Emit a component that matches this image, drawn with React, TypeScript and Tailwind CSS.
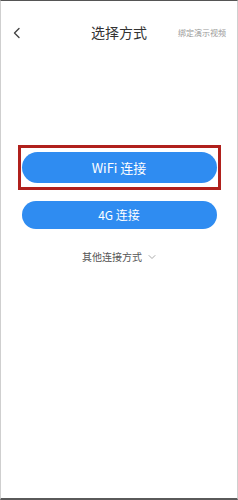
import React from 'react';

const font = { fontFamily: '"Noto Sans CJK SC", "Noto Sans", sans-serif' };

export default function App() {
  return (
    <div
      className="w-[238px] h-[500px] bg-white border-x border-x-[#cfcfcf] border-t border-t-[#555] border-b-2 border-b-[#5a5a5a] flex flex-col"
      style={font}
    >
      {/* header */}
      <div className="relative h-[62px] flex items-center justify-center">
        <svg
          className="absolute left-[11px] top-[26px]"
          width="10"
          height="12"
          viewBox="0 0 10 12"
          fill="none"
          stroke="#444"
          strokeWidth="1.4"
          strokeLinecap="round"
          strokeLinejoin="round"
        >
          <path d="M7 1.5 L2.5 6 L7 10.5" />
        </svg>
        <span className="text-[14px] text-[#333] leading-none">选择方式</span>
        <span className="absolute right-[11px] top-[28px] text-[8px] text-[#999] leading-none">
          绑定演示视频
        </span>
      </div>

      {/* buttons */}
      <div className="flex flex-col items-center mt-[82px]">
        <div className="border-[3px] border-[#b0201c] w-[203px] px-[1px] py-[4px] flex">
          <button className="w-full h-[31px] rounded-full bg-[#2f8cf1] text-white text-[13px] leading-none flex items-center justify-center">
            WiFi 连接
          </button>
        </div>
        <button className="mt-[11px] w-[195px] h-[28px] rounded-full bg-[#2f8cf1] text-white text-[12px] leading-none flex items-center justify-center">
          4G 连接
        </button>
        <div className="mt-[23px] flex items-center gap-[6px] text-[10px] text-[#555] leading-none">
          <span>其他连接方式</span>
          <svg width="8" height="6" viewBox="0 0 8 6" fill="none" stroke="#aaa" strokeWidth="1" strokeLinecap="round">
            <path d="M1 1.5 L4 4.5 L7 1.5" />
          </svg>
        </div>
      </div>
    </div>
  );
}
